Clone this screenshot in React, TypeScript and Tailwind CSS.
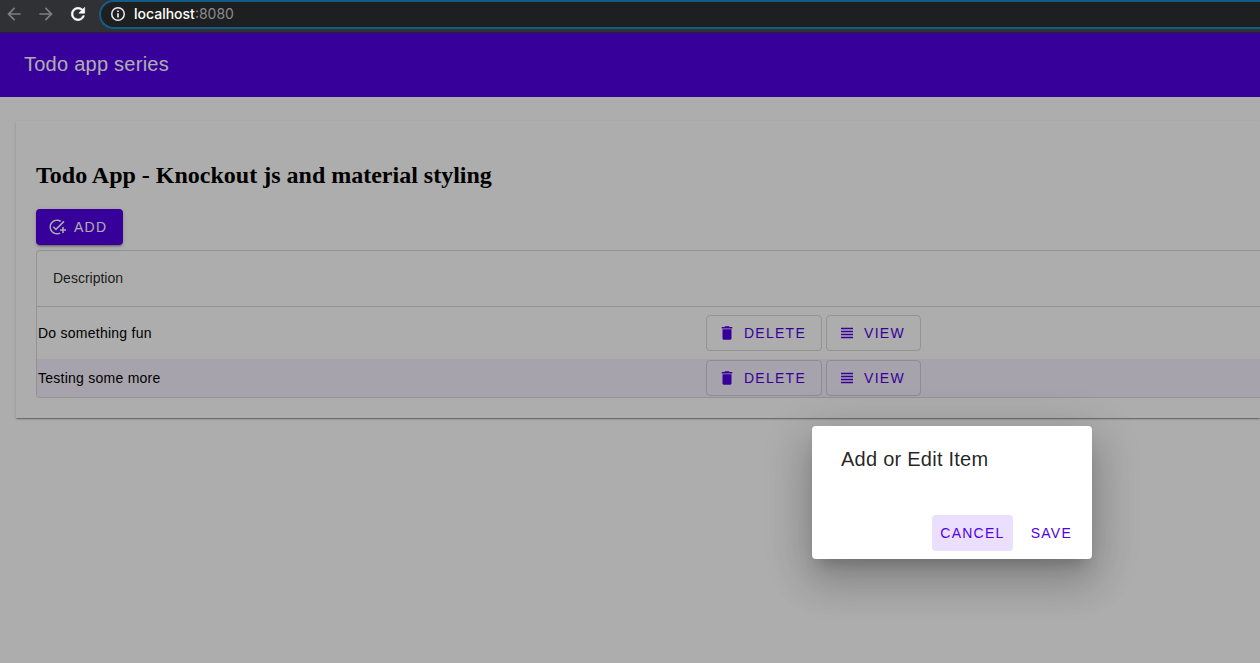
import React from "react";
import { MdAddTask, MdArrowBack, MdArrowForward, MdDelete, MdViewHeadline } from "react-icons/md";

const todos = [
  { id: 1, description: "Do something fun", row: "h-[53px]" },
  { id: 2, description: "Testing some more", row: "h-[38px] bg-[#f6f1fe]" },
];

function ReloadIcon() {
  return (
    <svg viewBox="0 0 24 24" className="size-5" fill="currentColor" stroke="currentColor" strokeWidth="0.7" aria-hidden="true">
      <path d="M17.65 6.35A7.958 7.958 0 0 0 12 4a8 8 0 1 0 7.73 10h-2.08A5.99 5.99 0 0 1 12 18a6 6 0 1 1 0-12c1.66 0 3.14.69 4.22 1.78L13 11h7V4l-2.35 2.35z" />
    </svg>
  );
}

function InfoIcon() {
  return (
    <svg viewBox="0 0 16 16" className="size-4 text-[#ececec]" fill="none" stroke="currentColor" strokeWidth="1.5" aria-hidden="true">
      <circle cx="8" cy="8" r="6.25" />
      <path d="M8 7.2v4.2M8 4.4v1.6" strokeWidth="1.7" />
    </svg>
  );
}

function BrowserBar() {
  return (
    <div className="flex h-[33px] items-start border-b border-[#242427] bg-[#303135] font-['Inter','Liberation_Sans',sans-serif]">
      <nav className="flex h-7 items-center gap-3 pl-1">
        <button type="button" aria-label="Back" className="text-[#7d7e80]">
          <MdArrowBack size={20} />
        </button>
        <button type="button" aria-label="Forward" className="text-[#7d7e80]">
          <MdArrowForward size={20} />
        </button>
        <button type="button" aria-label="Reload" className="text-white">
          <ReloadIcon />
        </button>
      </nav>
      <div className="ml-[11px] flex h-[29px] flex-1 items-center gap-2 rounded-l-full border-y-2 border-l-2 border-[#165b85] bg-[#1e1f21] pb-px pl-[9px] text-sm text-[#8b8c8e]">
        <InfoIcon />
        <span>
          <span className="font-medium text-white">localhost</span>:8080
        </span>
      </div>
    </div>
  );
}

function OutlinedButton({ icon, label }: { icon: React.ReactNode; label: string }) {
  return (
    <button
      type="button"
      className="inline-flex h-9 items-center gap-2 rounded border border-black/15 pr-[15px] pl-[11px] text-sm tracking-[0.09em] text-[#5200e4]"
    >
      {icon}
      {label}
    </button>
  );
}

function TodoTable() {
  return (
    <div className="mt-[5px] overflow-hidden rounded-l border-y border-l border-black/15">
      <table className="w-full table-fixed border-collapse text-left text-sm">
        <thead>
          <tr className="h-[55px] border-b border-black/15">
            <th scope="col" className="w-[668px] px-4 font-normal text-black/87">
              Description
            </th>
            <th aria-label="Actions" />
          </tr>
        </thead>
        <tbody>
          {todos.map((todo) => (
            <tr key={todo.id} className={todo.row}>
              <td className="px-px tracking-[0.018em]">{todo.description}</td>
              <td className="px-px">
                <div className="flex gap-1">
                  <OutlinedButton icon={<MdDelete size={18} />} label="DELETE" />
                  <OutlinedButton icon={<MdViewHeadline size={18} />} label="VIEW" />
                </div>
              </td>
            </tr>
          ))}
        </tbody>
      </table>
    </div>
  );
}

function ItemDialog() {
  return (
    <div
      role="dialog"
      aria-labelledby="dialog-title"
      className="absolute top-[393px] left-[812px] w-[280px] rounded bg-white shadow-[0_11px_15px_-7px_rgba(0,0,0,0.2),0_24px_38px_3px_rgba(0,0,0,0.14),0_9px_46px_8px_rgba(0,0,0,0.12)]"
    >
      <h2 id="dialog-title" className="px-[29px] pt-[17px] text-xl leading-8 tracking-[0.0125em] text-black/87">
        Add or Edit Item
      </h2>
      <div className="flex justify-end gap-2.5 px-3 pt-10 pb-2 text-sm tracking-[0.09em] text-[#5200e4]">
        <button type="button" className="h-9 rounded bg-[#eadffc] px-2">
          CANCEL
        </button>
        <button type="button" className="h-9 rounded px-2">
          SAVE
        </button>
      </div>
    </div>
  );
}

export default function App() {
  return (
    <div className="flex min-h-screen flex-col overflow-hidden bg-white font-['Liberation_Sans',sans-serif] text-black">
      <BrowserBar />
      <div className="relative flex-1 overflow-hidden">
        <header className="h-16 bg-[#5200e4] px-6 pt-[15px]">
          <span className="block text-xl leading-8 tracking-[0.0125em] text-white">Todo app series</span>
        </header>
        <main className="mt-6 ml-4 bg-white pb-5 pl-5 shadow-[0_2px_1px_-1px_rgba(0,0,0,0.2),0_1px_1px_0_rgba(0,0,0,0.14),0_1px_3px_0_rgba(0,0,0,0.12)]">
          <h1 className="pt-10 pb-5 font-['Liberation_Serif',serif] text-2xl leading-7 font-bold">
            Todo App - Knockout js and material styling
          </h1>
          <button
            type="button"
            className="flex h-9 items-center gap-2 rounded bg-[#5200e4] pr-4 pl-3 text-sm tracking-[0.09em] text-white shadow-[0_3px_1px_-2px_rgba(0,0,0,0.2),0_2px_2px_0_rgba(0,0,0,0.14),0_1px_5px_0_rgba(0,0,0,0.12)]"
          >
            <MdAddTask size={18} />
            ADD
          </button>
          <TodoTable />
        </main>
        <div className="absolute inset-0 bg-black/32" />
        <ItemDialog />
      </div>
    </div>
  );
}
